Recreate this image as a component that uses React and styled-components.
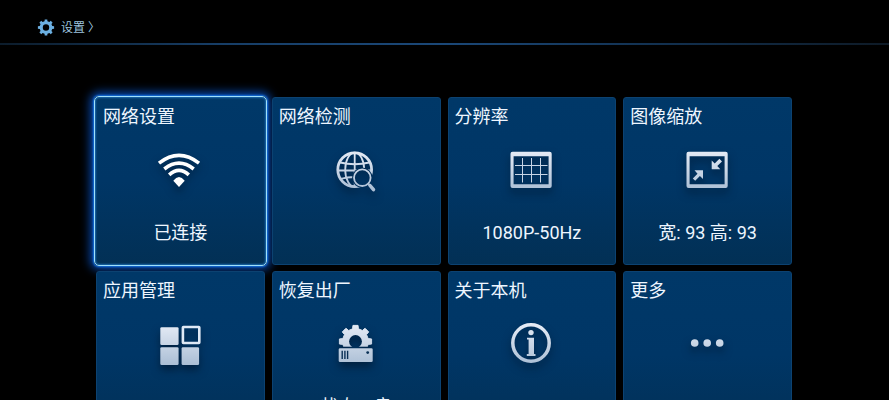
import styled, { createGlobalStyle, css } from "styled-components";

const GlobalStyle = createGlobalStyle`
  * {
    box-sizing: border-box;
  }

  body {
    margin: 0;
    background: #000;
    font-family: Roboto, "Noto Sans CJK SC", sans-serif;
  }
`;

const Screen = styled.div`
  height: 100vh;
  overflow: hidden;
  background: #000;
`;

const Header = styled.header`
  display: flex;
  align-items: center;
  height: 45px;
  padding: 12px 37px 0;
  border-bottom: 2px solid;
  border-image: linear-gradient(
      to right,
      #0c1c2b,
      #173e67 25%,
      #1b4878 50%,
      #12304f 75%,
      #0e1a26
    )
    1;
`;

const Crumb = styled.a`
  display: flex;
  align-items: center;
  gap: 6px;
  color: #9cc3df;
  font-size: 12px;
  line-height: 18px;
  text-decoration: none;

  svg {
    width: 18px;
    height: 18px;
  }
`;

const Grid = styled.main`
  display: grid;
  grid-template-columns: repeat(4, 1fr);
  grid-auto-rows: 168px;
  gap: 6px 7px;
  padding: 52px 97px 0 96px;
`;

const Tile = styled.button`
  display: flex;
  flex-direction: column;
  align-items: center;
  padding: 7px 6px 0;
  border: 1px solid #0c4271;
  border-radius: 3px;
  background: linear-gradient(#003868, #003666 50%, #023055);
  color: #eef6ff;
  font-family: inherit;
  cursor: pointer;

  ${(props) =>
    props.$selected &&
    css`
      margin: -1px -2px;
      padding: 8px 8px 0;
      border-color: #9fe0fb;
      border-radius: 5px;
      box-shadow:
        0 0 2px 1px #1470e0,
        0 0 10px 4px #0646a8,
        inset 0 0 2px 1px #1c6cb0;
    `}
`;

const TileTitle = styled.span`
  align-self: flex-start;
  font-size: 18px;
  line-height: 24px;
`;

const TileIcon = styled.svg`
  flex: none;
  width: 48px;
  height: 48px;
  margin-top: 17px;
  overflow: visible;
  filter: drop-shadow(0 5px 4px rgba(0, 10, 25, 0.5));
`;

const TileStatus = styled.span`
  margin-top: 27px;
  font-size: 18px;
  line-height: 24px;
  white-space: nowrap;
`;

const HiddenDefs = styled.svg`
  display: block;
  width: 0;
  height: 0;
`;

const silver = "url(#silver)";

const SilverGradient = () => (
  <HiddenDefs aria-hidden="true">
    <defs>
      <linearGradient
        id="silver"
        gradientUnits="userSpaceOnUse"
        x1="0"
        y1="4"
        x2="0"
        y2="46"
      >
        <stop offset="0" stopColor="#e6ecf6" />
        <stop offset="1" stopColor="#a9bdd4" />
      </linearGradient>
    </defs>
  </HiddenDefs>
);

// outline of an eight tooth gear
const gearPath = (cx, cy, outer, inner) => {
  const points = [];
  for (let i = 0; i < 8; i++) {
    [
      [-13, inner],
      [-9, outer],
      [9, outer],
      [13, inner],
    ].forEach(([deg, r]) => {
      const a = ((i * 45 + deg) * Math.PI) / 180;
      points.push(
        `${(cx + r * Math.sin(a)).toFixed(2)} ${(cy - r * Math.cos(a)).toFixed(2)}`
      );
    });
  }
  return `M${points.join("L")}Z`;
};

const SettingsGear = () => (
  <svg viewBox="0 0 18 18" aria-hidden="true">
    <path
      fill="#6cb0e2"
      fillRule="evenodd"
      d={`${gearPath(9, 8.5, 8.2, 6.4)}M12.2 8.500a3.2 3.2 0 1 0-6.4 0a3.2 3.2 0 1 0 6.4 0Z`}
    />
  </svg>
);

const Wifi = () => (
  <g fill="none" stroke="#fff" strokeWidth="3.6">
    <path d="M3 17.2Q23 1.6 43 17.2" />
    <path d="M8.3 23Q23 11.2 37.7 23" />
    <path d="M13.200 28.9Q23 20 32.800 28.9" />
    <path
      d="M17.3 34.8Q23 27.400 28.7 34.8L23 41Z"
      fill="#fff"
      stroke="none"
    />
  </g>
);

const GlobeSearch = () => (
  <g fill="none" stroke={silver}>
    <mask id="lensGap" maskUnits="userSpaceOnUse" x="0" y="0" width="48" height="48">
      <rect width="48" height="48" fill="#fff" stroke="none" />
      <circle cx="30.3" cy="31.7" r="10.2" fill="#000" stroke="none" />
      <path d="M35 36.5L42 44" stroke="#000" strokeWidth="6" />
    </mask>
    <g mask="url(#lensGap)" strokeWidth="1.8">
      <circle cx="22.7" cy="23.7" r="16.9" strokeWidth="2.8" />
      <ellipse cx="22.7" cy="23.7" rx="9.5" ry="17" />
      <path d="M22.7 7V41M8 16.5Q22.7 20 37.5 16.5M6 24.5H40M8 33Q22.7 29 37 33" />
    </g>
    <circle cx="30.3" cy="31.7" r="8.3" strokeWidth="1.8" />
    <path d="M36.5 38L38 39.5" strokeWidth="2" />
    <path d="M38 39.5L41.5 43.7" strokeWidth="3.5" strokeLinecap="round" />
  </g>
);

const Frame = () => (
  <path
    fill={silver}
    fillRule="evenodd"
    d="M4.5 5.7H41.7a2 2 0 0 1 2 2V40a2 2 0 0 1-2 2H4.5a2 2 0 0 1-2-2V7.7a2 2 0 0 1 2-2ZM5.6 10.3V38.3H40.6V10.3Z"
  />
);

const Resolution = () => (
  <>
    <Frame />
    <path
      fill="none"
      stroke="#c8d5e6"
      strokeWidth="1"
      d="M14.5 12V36.5M23.5 12V36.5M32.5 12V36.5M7 19.5H39.5M7 28.5H39.5"
    />
  </>
);

const Zoom = () => (
  <>
    <Frame />
    <path
      fill={silver}
      d="M19 24.3V33L15.9 30.1L11.2 34.8L8.8 32.4L13.5 27.7L10.5 24.3Z"
    />
    <path
      fill={silver}
      d="M27.7 23.3V14.6L30.7 17.5L35.4 12.8L38 15.4L33.3 20.1L36.3 23.3Z"
    />
  </>
);

const Apps = () => (
  <g fill={silver}>
    <rect x="4.3" y="7.3" width="18.3" height="17.7" rx="1.3" />
    <rect x="4.3" y="27.3" width="18.3" height="17.7" rx="1.3" />
    <rect x="25.6" y="27.3" width="17.5" height="17.7" rx="1.3" />
    <rect
      x="26.9"
      y="7"
      width="16.4"
      height="16"
      rx="0.5"
      fill="none"
      stroke="#dfe9f6"
      strokeWidth="2.6"
    />
  </g>
);

const Restore = () => (
  <g fill={silver}>
    <mask id="halfGear" maskUnits="userSpaceOnUse" x="0" y="0" width="48" height="48">
      <rect width="48" height="26.7" fill="#fff" />
      <circle cx="23.5" cy="21.5" r="6.4" fill="#000" />
    </mask>
    <path
      d={gearPath(23.5, 21.5, 16.3, 13)}
      stroke={silver}
      strokeLinejoin="round"
      mask="url(#halfGear)"
    />
    <rect x="6.7" y="28.3" width="34" height="13.7" rx="1.3" />
    <path
      d="M10.2 30.7V39M12.9 30.7V39M15.6 30.7V39"
      stroke="#0a3056"
      strokeWidth="1.4"
    />
    <circle cx="35.7" cy="32.6" r="1.4" fill="#0a3056" />
  </g>
);

const About = () => (
  <g fill={silver}>
    <circle cx="23" cy="23" r="18.2" fill="none" stroke={silver} strokeWidth="3.5" />
    <circle cx="23" cy="12.6" r="2.7" />
    <path d="M19 17.7H26V34H27.5V36H18.8V34H20.6V19.6H19Z" />
  </g>
);

const More = () => (
  <g fill={silver}>
    <circle cx="10.7" cy="23" r="3.8" />
    <circle cx="23.2" cy="23" r="3.8" />
    <circle cx="35.7" cy="23" r="3.8" />
  </g>
);

const tiles = [
  { title: "网络设置", icon: Wifi, status: "已连接", selected: true },
  { title: "网络检测", icon: GlobeSearch },
  { title: "分辨率", icon: Resolution, status: "1080P-50Hz" },
  { title: "图像缩放", icon: Zoom, status: "宽: 93 高: 93" },
  { title: "应用管理", icon: Apps },
  { title: "恢复出厂", icon: Restore, status: "状态：良" },
  { title: "关于本机", icon: About },
  { title: "更多", icon: More },
];

const App = () => {
  return (
    <Screen lang="zh-CN">
      <GlobalStyle />
      <SilverGradient />
      <Header>
        <Crumb href="#settings">
          <SettingsGear />
          设置 〉
        </Crumb>
      </Header>
      <Grid>
        {tiles.map(({ title, icon: Icon, status, selected }) => (
          <Tile key={title} type="button" $selected={selected}>
            <TileTitle>{title}</TileTitle>
            <TileIcon viewBox="0 0 48 48" aria-hidden="true">
              <Icon />
            </TileIcon>
            {status && <TileStatus>{status}</TileStatus>}
          </Tile>
        ))}
      </Grid>
    </Screen>
  );
};

export default App;
